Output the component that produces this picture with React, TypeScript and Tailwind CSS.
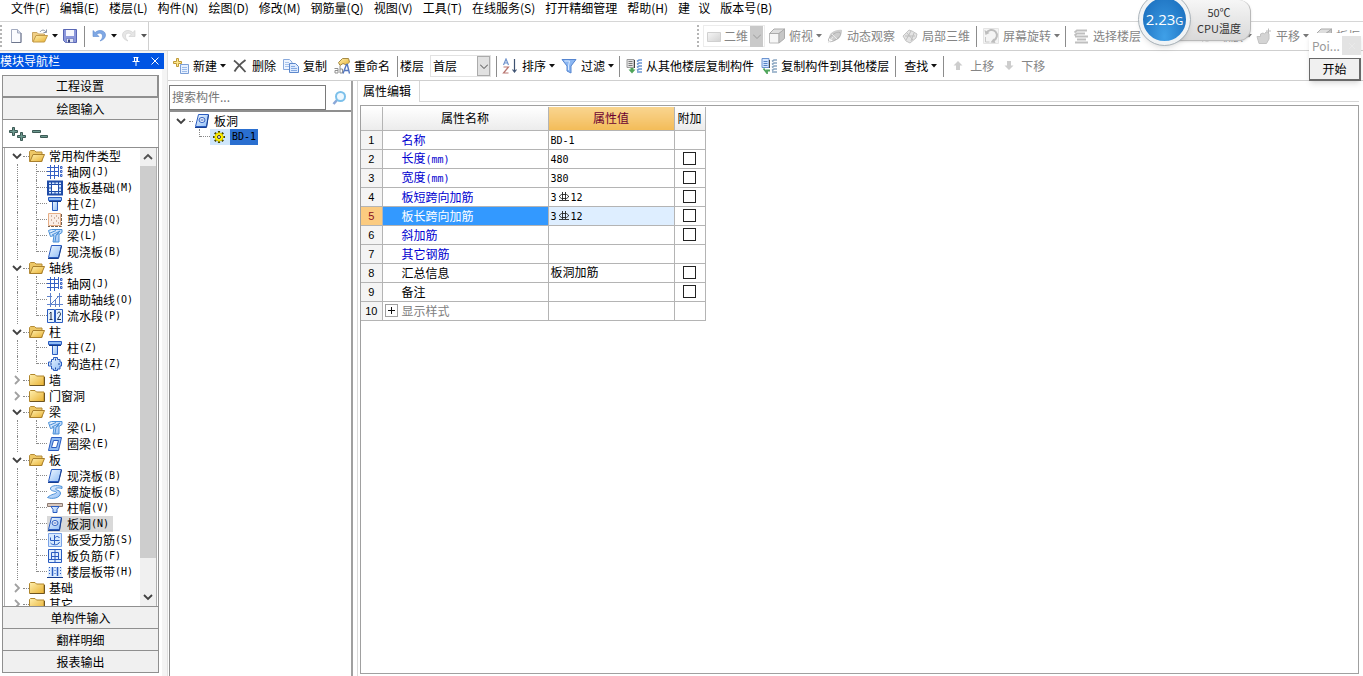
import React, { useState } from 'react';

type IconName =
  | 'newFile' | 'openFile' | 'save' | 'undo' | 'redo'
  | 'newItem' | 'cross' | 'copy' | 'rename' | 'sort' | 'filter' | 'copyFrom' | 'copyTo' | 'up' | 'down'
  | 'flat' | 'cube' | 'orbit' | 'part3d' | 'rotate' | 'floors' | 'zoom' | 'pan' | 'search'
  | 'folderOpen' | 'folder' | 'grid' | 'raft' | 'column' | 'wall' | 'beam' | 'slab' | 'auxAxis' | 'section'
  | 'tieColumn' | 'ringBeam' | 'spiral' | 'cap' | 'hole' | 'mainBar' | 'negBar' | 'strip' | 'gear';

const BLUE = '#2a5cc0';
const LIGHT = 'url(#steel)';

// shared gradients, referenced by id from the icons
const IconDefs = () => (
  <svg className="absolute w-0 h-0" aria-hidden="true">
    <defs>
      <linearGradient id="steel" x1="0" y1="0" x2="1" y2="1">
        <stop offset="0" stopColor="#f0f8ff" />
        <stop offset="1" stopColor="#8fbcf5" />
      </linearGradient>
      <linearGradient id="gold" x1="0" y1="0" x2="1" y2="1">
        <stop offset="0" stopColor="#fff0b0" />
        <stop offset="1" stopColor="#e8b030" />
      </linearGradient>
      <linearGradient id="ash" x1="0" y1="0" x2="1" y2="1">
        <stop offset="0" stopColor="#f6f6f6" />
        <stop offset="1" stopColor="#d2d2d2" />
      </linearGradient>
    </defs>
  </svg>
);

const shapes: Record<IconName, React.ReactNode> = {
  newFile: (
    <>
      <path d="M3.500 1.500h6l3.500 3.500v9.500H3.500z" fill="#fbfcff" stroke="#a3abc0" />
      <path d="M9.500 1.500V5H13" fill="#d5dbea" stroke="#a3abc0" />
      <path d="M13 5v9.500H3.500" fill="none" stroke="#6c758c" />
    </>
  ),
  openFile: (
    <>
      <path d="M.5 13.500V4.500h4.500L6.500 6h6v7.500z" fill="#f0cf86" stroke="#c9a562" />
      <path d="M1 14l3-6.500h11.500L12.500 14z" fill="url(#gold)" stroke="#c39a48" />
      <path d="M8 4c1.500-2.500 4.500-2.500 6 0M14.500 1.500v3h-3" fill="none" stroke="#8b95a5" />
    </>
  ),
  save: (
    <>
      <path d="M1.500 1.500h13v13h-11l-2-2z" fill="#8c98dc" stroke="#5866b4" />
      <path d="M4 2h8v6H4z" fill="#f6f7fd" />
      <path d="M4.500 10.500h7v4h-7z" fill="#e2e6f4" stroke="#5866b4" strokeWidth=".6" />
      <path d="M6 11.500h2v3H6z" fill="#38447f" />
    </>
  ),
  undo: (
    <path d="M2 2.500v6h6L5.800 6.300C8 4.300 11.500 5 11.500 8c0 2-1 3.500-2.500 5 3.500-1 5.500-3.300 5.500-6C14.500 2.500 8 .8 4.200 4.500z" fill="#7fa8e4" stroke="#5f8bd0" strokeWidth=".6" />
  ),
  redo: (
    <path d="M14 2.500v6H8l2.200-2.200C8 4.300 4.500 5 4.500 8c0 2 1 3.500 2.500 5C3.500 12 1.500 9.700 1.500 7 1.500 2.500 8 .8 11.800 4.500z" fill="#e6e6e6" stroke="#cccccc" strokeWidth=".6" />
  ),
  newItem: (
    <>
      <path d="M7.500 6.500h8v9h-8z" fill="#e8f1ff" stroke="#7c9fd6" />
      <path d="M9 9.500h5M9 11.500h5M9 13.500h5" stroke="#9bbbea" />
      <path d="M3.500 .5h2v3h3v2h-3v3h-2v-3h-3v-2h3z" fill="#ffe88c" stroke="#bf9a38" />
    </>
  ),
  cross: <path d="M2 2.500C6 5.500 10 10 13.500 14M13.500 2C9.500 5 5 9 2.500 13.500" stroke="#555" strokeWidth="1.800" />,
  copy: (
    <>
      <path d="M.5 1.500h6l2.500 2.500v7.500H.5z" fill="#eef5ff" stroke="#88a9dc" />
      <path d="M2 4.500h4M2 6.500h5M2 8.500h5" stroke="#a9c4ec" />
      <path d="M6.500 5.500h6l3 3v6h-9z" fill="#dceaff" stroke="#5d88cc" />
      <path d="M8 8.500h4M8 10.500h6M8 12.500h6" stroke="#85aae2" />
    </>
  ),
  rename: (
    <>
      <path d="M4.500 4.500l4-4h6L15.500 4l-3 3-3.500-1.500-3 2z" fill="url(#gold)" stroke="#a58a45" />
      <path d="M0.500 10.500h3.500v4.500H1v-2.500h3M6 8v7h2.500v-4H6" fill="none" stroke="#8f8f8f" />
      <path d="M9 15.500l3.500-9h.8l2.200 9M10.500 12.500h4.500" fill="none" stroke="#5577c0" strokeWidth="1.400" />
    </>
  ),
  sort: (
    <>
      <path d="M1.500 7l2.500-6 2.500 6M2.500 5h3" fill="none" stroke="#6f92cc" strokeWidth="1.200" />
      <path d="M1.500 9h5l-5 6h5" fill="none" stroke="#b97772" strokeWidth="1.200" />
      <path d="M12.500 1v12M10.500 11.500l2 2.500 2-2.500" fill="none" stroke="#3d5170" strokeWidth="1.200" />
    </>
  ),
  filter: (
    <>
      <path d="M1 1.500h14L10 8v7l-4-2V8z" fill="#8ab6f2" stroke="#5585d0" />
      <path d="M3.500 3h5L7.500 8v4" fill="none" stroke="#dcebff" />
    </>
  ),
  copyFrom: (
    <>
      <path d="M1 1.500h7v8H1z" fill="#e2e2e2" stroke="#9a9a9a" />
      <path d="M2.500 3.500h4M2.500 5.500h4M2.500 7.500h4" stroke="#777" />
      <path d="M8.500 2v8" stroke="#444" />
      <path d="M2.500 11.500h2V10h3v1.500h2l-3.500 4z" fill="#4fa55a" />
      <path d="M16 2h-3l-2 1.500M16 5h-3l-2 1.500M16 8h-3l-2 1.500M16 11h-3l-2 1.500M16 14h-5" fill="none" stroke="#6c96d2" strokeWidth="1.600" />
    </>
  ),
  copyTo: (
    <>
      <path d="M1 .5h7v9H1z" fill="#d5e6ff" stroke="#6c94d0" />
      <path d="M2.500 3.500h4M2.500 5.500h4M2.500 7.500h4" stroke="#5583c4" />
      <path d="M8.500 2v8" stroke="#444" />
      <path d="M2.500 10.500L6 15v-2.500h3" fill="none" stroke="#4fa55a" strokeWidth="1.800" />
      <path d="M16 2h-3l-2 1.500M16 5h-3l-2 1.500M16 8h-3l-2 1.500M16 11h-3l-2 1.500M16 14h-5" fill="none" stroke="#8aa6c2" strokeWidth="1.600" />
    </>
  ),
  up: <path d="M8 3l4.500 4.500H10V12H6V7.500H3.500z" fill="#cdcdcd" />,
  down: <path d="M8 12L3.500 7.500H6V3h4v4.500h2.500z" fill="#cdcdcd" />,
  flat: <path d="M1.500 4.500h13v9h-13z" fill="url(#ash)" stroke="#d0d0d0" />,
  cube: (
    <>
      <path d="M.5 5.500h9.500v9.500H.5z" fill="#f6f6f6" stroke="#bcbcbc" />
      <path d="M.5 5.500L5 1h10.500L10 5.500z" fill="#dedede" stroke="#ababab" />
      <path d="M10 5.500L15.500 1v9.500L10 15z" fill="#c6c6c6" stroke="#ababab" />
    </>
  ),
  orbit: (
    <>
      <path d="M2 10C2 5 8 1 15 2c0 6-3 10-9 11z" fill="#cdcdcd" />
      <ellipse cx="7.500" cy="9" rx="7" ry="3" transform="rotate(-35 7.500 9)" fill="none" stroke="#b2b2b2" />
      <path d="M1 15l5-6M5 6l5 5" stroke="#eaeaea" />
    </>
  ),
  part3d: (
    <>
      <path d="M1 8l6-6 3 1 5 3-1 4-6 5-4-2z" fill="#e4e4e4" stroke="#c4c4c4" />
      <path d="M5 5l6 7M9 3L4 12M12 5l-3 8M3 8h10" stroke="#bfbfbf" fill="none" />
    </>
  ),
  rotate: (
    <>
      <path d="M.5 .5h15v15H.5z" fill="#f4f4f4" stroke="#e4e4e4" />
      <path d="M3.500 5a5.500 5.500 0 1 1 7 7.500" fill="none" stroke="#bdbdbd" strokeWidth="2" />
      <path d="M1.500 2l1 5 4-2zM12.500 15l-5-.5 3-4z" fill="#bdbdbd" />
      <path d="M2.500 9v5h4" fill="none" stroke="#c8c8c8" />
    </>
  ),
  floors: (
    <path d="M4 2.500h10M4 5.500h8M2 8.500h13M4 11.500h9M2 14.500h13M4.500 2L1.500 4.500M4.500 5L1.500 7.500" stroke="#bfbfbf" strokeWidth="1.800" fill="none" />
  ),
  zoom: (
    <>
      <circle cx="8" cy="8" r="5" fill="#e4e4e4" stroke="#bdbdbd" />
      <path d="M3 13l3-3" stroke="#bdbdbd" strokeWidth="2" />
    </>
  ),
  pan: (
    <>
      <path d="M1 8.500h3.500V6L7 5l1.500 1L10 4h1.500l1.500 2v5l-2.500 4.500H3z" fill="#d4d4d4" stroke="#c2c2c2" />
      <path d="M12.500 .5v5M10 3h5" stroke="#bbb" />
    </>
  ),
  search: (
    <>
      <path d="M6.500 9.500L2.500 14" stroke="#8aa8d8" strokeWidth="2.600" />
      <circle cx="9.500" cy="6.500" r="4.500" fill="#eef8ff" stroke="#7cc0ea" strokeWidth="2" />
    </>
  ),
  folderOpen: (
    <>
      <path d="M.5 13.500v-10l1-1h4l1.500 1.500h6v9.500z" fill="#edc766" stroke="#b58c38" />
      <path d="M1 13.500L4 6.500h11.500L12.500 13.500z" fill="url(#gold)" stroke="#a87f2c" />
    </>
  ),
  folder: (
    <>
      <path d="M.5 13.500V3.500l1-1h4.500L7.500 4h7.500v9.500z" fill="url(#gold)" stroke="#b0862c" />
      <path d="M1 13.500h14.500V5" fill="none" stroke="#6e5420" />
    </>
  ),
  grid: (
    <>
      <path d="M3.500 1v14M7.500 1v14M11.500 1v12M0 3.500h12M0 7.500h12M0 11.500h12" stroke="#3560c4" fill="none" />
      <path d="M13.500 2.500h1.500v2h-1.500zM13.500 6.500h1.500v2h-1.500zM13.500 10.500h1.500v2h-1.500z" stroke="#3560c4" fill="#fff" />
    </>
  ),
  raft: (
    <>
      <path d="M1 1.500h14v13H1z" fill="#d4e8ff" stroke="#1f4ca8" strokeWidth="2" />
      <path d="M4.500 4.500h7v7h-7z" fill="#fff" stroke="#1f4ca8" />
      <path d="M4.500 2v2.500M8 2v2.500M11.500 2v2.500M4.500 11.500V14M8 11.500V14M11.500 11.500V14M2 4.500h2.500M2 8h2.500M2 11.500h2.500M11.500 4.500H14M11.500 8H14M11.500 11.500H14" stroke="#1f4ca8" />
    </>
  ),
  column: (
    <>
      <path d="M5.500 5h5v9.500h-5z" fill={LIGHT} stroke={BLUE} />
      <path d="M1.500 1.500h13v3h-13z" fill="#8fbcf5" stroke={BLUE} />
      <path d="M2 5.500h12" stroke="#123a86" />
    </>
  ),
  wall: (
    <>
      <path d="M1.500 1.500h12v12h-12z" fill="#fbeee6" stroke="#e6ae86" />
      <path d="M14.500 2v12.500H1" fill="none" stroke="#75604f" strokeDasharray="3 1" />
      <path d="M4 8h1M7 6h1M9 9h1M6 11h1M9 4h1M4 4h1M11 11h1M11 6h1" stroke="#a5765f" />
    </>
  ),
  beam: (
    <>
      <path d="M1.500 2.500l3-1h10.500v3l-3 2v7.500h-6l1-6.500-3.500 1z" fill={LIGHT} stroke="#4a90d8" />
      <path d="M2 5.500l7-3M5 7l8-4M8 14l1-7 4-4M9 7l3-1.500" stroke="#4a90d8" fill="none" />
    </>
  ),
  slab: (
    <>
      <path d="M4.500 1.500h10l-3 12h-10z" fill={LIGHT} stroke={BLUE} />
      <path d="M1 14.500h10.500l3-12.500" fill="none" stroke="#173f90" />
    </>
  ),
  auxAxis: (
    <path d="M3.500 1v14M12.500 1v14M0 4.500h5M0 12.500h16M10 4.500h5M4 12l9-9M8.500 7v8" stroke="#5f82cc" fill="none" />
  ),
  section: (
    <>
      <path d="M.5 1.500h7v13h-7zM8.500 1.500h7v13h-7z" fill="#e8f4ff" stroke={BLUE} />
      <path d="M2.500 5.500L4 4v7.500M2.500 11.500h3M10.500 5.500c.5-2 3-1.800 3 .3 0 1.700-2 3.200-3 5.700h3.500" fill="none" stroke="#1c2d4a" />
    </>
  ),
  tieColumn: (
    <>
      <path d="M4.500 3.500h2v-2h4v2h2.500v2.500h1.500v4H13v3h-2.500v1.500h-4V13h-2v-3h-3V6h3z" fill={LIGHT} stroke={BLUE} />
      <path d="M3 8h2M11 8h2M8.500 2.500v2M8.500 11.500v2" stroke="#1f4ca8" />
    </>
  ),
  ringBeam: (
    <>
      <path d="M4.500 1.500h10l-3 13h-10z" fill="#8fbcf5" stroke={BLUE} />
      <path d="M6.500 4.500h5l-2 7h-5z" fill="#fff" stroke={BLUE} />
    </>
  ),
  spiral: (
    <path d="M15 2.500C9 .5 3 2 3.500 5c.5 2.500 6 2 6 3.500S4 10 .5 13.500c5 2 13 .5 13-4.500 0-3-5-2.500-5-4 0-1 3-1.500 6.500-.5z" fill={LIGHT} stroke="#4a90d8" />
  ),
  cap: (
    <>
      <path d="M.5 3.500h15v3H.5z" fill="#d8c8be" stroke="#8d7b72" />
      <path d="M4 6.500h8l-2 3v3H6v-3z" fill={LIGHT} stroke={BLUE} />
    </>
  ),
  hole: (
    <>
      <path d="M4.500 1.500h10l-2 12h-11z" fill={LIGHT} stroke={BLUE} />
      <path d="M1 14.500h11.500l2-12.500" fill="none" stroke="#173f90" />
      <ellipse cx="8" cy="7" rx="3" ry="2.500" fill="#fff" stroke={BLUE} />
      <path d="M6.500 7h3" stroke={BLUE} />
    </>
  ),
  mainBar: (
    <>
      <path d="M1.500 1.500h13v13h-13z" fill="#d6e9ff" stroke="#7aa2e6" />
      <path d="M7.500 3v9M3.500 5.500v3h9M12.500 6c-2-3-5-1-5 1M3.500 11c2 2.500 8 2.500 9-1" stroke={BLUE} fill="none" />
    </>
  ),
  negBar: (
    <>
      <path d="M1.500 1.500h13v13h-13z" fill="#e0efff" stroke={BLUE} />
      <path d="M4.500 11V4.500h7V11M4.500 8.500h7M8 2v12M2 11.500h12" stroke={BLUE} fill="none" />
    </>
  ),
  strip: (
    <>
      <path d="M1 3h14v10H1z" fill="#dcecff" />
      <path d="M5.500 3v9M10.500 3v9" stroke={BLUE} strokeWidth="1.500" />
      <path d="M2.500 3v9M8 3v9M13.500 3v9" stroke={BLUE} strokeDasharray="1 2" />
      <path d="M0 13.500h16" stroke="#173f90" />
    </>
  ),
  gear: (
    <>
      <path d="M8 2v12M2 8h12M3.800 3.800l8.400 8.400M12.200 3.800l-8.400 8.400" stroke="#4b4b00" strokeWidth="2.200" />
      <circle cx="8" cy="8" r="4" fill="#fff200" stroke="#e0d000" />
      <path d="M8 3.500v9M3.500 8h9" stroke="#fff200" />
      <circle cx="8" cy="8" r="1.500" fill="#fff" stroke="#333" />
    </>
  ),
};

const Icon = ({ name, className = '' }: { name: IconName; className?: string }) => (
  <svg viewBox="0 0 16 16" className={`w-4 h-4 shrink-0 ${className}`} fill="none" aria-hidden="true">
    {shapes[name]}
  </svg>
);

const Caret = ({ color = '#111' }: { color?: string }) => (
  <svg viewBox="0 0 6 4" className="w-[6px] h-1 shrink-0" aria-hidden="true">
    <path d="M0 0h6L3 3.500z" fill={color} />
  </svg>
);

const Chevron = ({ open = true, dir }: { open?: boolean; dir?: 'up' }) => (
  <svg viewBox="0 0 12 12" className="w-3 h-3 shrink-0" fill="none" aria-hidden="true">
    {dir === 'up' ? (
      <path d="M2 8l4-4 4 4" stroke="#505050" strokeWidth="1.800" />
    ) : open ? (
      <path d="M2 4l4 4 4-4" stroke="#404040" strokeWidth="1.800" />
    ) : (
      <path d="M4 2l4 4-4 4" stroke="#a0a0a0" strokeWidth="1.800" />
    )}
  </svg>
);

const Mono = ({ children }: { children: React.ReactNode }) => (
  <span className="font-['DejaVu_Sans_Mono',monospace] text-[10px]">{children}</span>
);

interface ToolProps {
  icon?: IconName;
  label: string;
  caret?: boolean;
  disabled?: boolean;
  className?: string;
}

const Tool = ({ icon, label, caret, disabled, className = 'mr-[7px]' }: ToolProps) => (
  <button
    type="button"
    disabled={disabled}
    className={`flex items-center gap-[3px] whitespace-nowrap shrink-0 ${disabled ? 'text-[#858585]' : 'text-black'} ${className}`}
  >
    {icon && <Icon name={icon} className="mr-px" />}
    {label}
    {caret && <Caret color={disabled ? '#777' : '#111'} />}
  </button>
);

const Sep = ({ className = 'mr-[6px]' }: { className?: string }) => (
  <span className={`w-px h-[21px] bg-[#8c8c8c] shrink-0 ${className}`} />
);

const menus = [
  '文件(F)', '编辑(E)', '楼层(L)', '构件(N)', '绘图(D)', '修改(M)', '钢筋量(Q)', '视图(V)',
  '工具(T)', '在线服务(S)', '打开精细管理', '帮助(H)', '建\u00a0\u00a0\u00a0议', '版本号(B)',
];

interface Leaf {
  icon: IconName;
  name: string;
  hotkey: string;
}

interface Group {
  name: string;
  open: boolean;
  items: Leaf[];
}

const groups: Group[] = [
  {
    name: '常用构件类型',
    open: true,
    items: [
      { icon: 'grid', name: '轴网', hotkey: 'J' },
      { icon: 'raft', name: '筏板基础', hotkey: 'M' },
      { icon: 'column', name: '柱', hotkey: 'Z' },
      { icon: 'wall', name: '剪力墙', hotkey: 'Q' },
      { icon: 'beam', name: '梁', hotkey: 'L' },
      { icon: 'slab', name: '现浇板', hotkey: 'B' },
    ],
  },
  {
    name: '轴线',
    open: true,
    items: [
      { icon: 'grid', name: '轴网', hotkey: 'J' },
      { icon: 'auxAxis', name: '辅助轴线', hotkey: 'O' },
      { icon: 'section', name: '流水段', hotkey: 'P' },
    ],
  },
  {
    name: '柱',
    open: true,
    items: [
      { icon: 'column', name: '柱', hotkey: 'Z' },
      { icon: 'tieColumn', name: '构造柱', hotkey: 'Z' },
    ],
  },
  { name: '墙', open: false, items: [] },
  { name: '门窗洞', open: false, items: [] },
  {
    name: '梁',
    open: true,
    items: [
      { icon: 'beam', name: '梁', hotkey: 'L' },
      { icon: 'ringBeam', name: '圈梁', hotkey: 'E' },
    ],
  },
  {
    name: '板',
    open: true,
    items: [
      { icon: 'slab', name: '现浇板', hotkey: 'B' },
      { icon: 'spiral', name: '螺旋板', hotkey: 'B' },
      { icon: 'cap', name: '柱帽', hotkey: 'V' },
      { icon: 'hole', name: '板洞', hotkey: 'N' },
      { icon: 'mainBar', name: '板受力筋', hotkey: 'S' },
      { icon: 'negBar', name: '板负筋', hotkey: 'F' },
      { icon: 'strip', name: '楼层板带', hotkey: 'H' },
    ],
  },
  { name: '基础', open: false, items: [] },
  { name: '其它', open: false, items: [] },
];

// dotted connector in front of a child node
const Elbow = ({ last }: { last: boolean }) => (
  <span className="flex w-[11px] h-4 shrink-0">
    <span className={`border-l border-dotted border-[#8a8a8a] ${last ? 'h-2' : 'h-4'}`} />
    <span className="flex-1 h-2 border-b border-dotted border-[#8a8a8a]" />
  </span>
);

const ModuleTree = () => (
  <ul className="flex-1 min-w-0 overflow-hidden">
    {groups.map((group) => (
      <li key={group.name}>
        <div className="flex items-center h-4 pl-[6px]">
          <Chevron open={group.open} />
          <span className="w-[6px] border-t border-dotted border-[#8a8a8a]" />
          <Icon name={group.open ? 'folderOpen' : 'folder'} />
          <span className="ml-1 whitespace-nowrap">{group.name}</span>
        </div>
        <ul>
          {group.items.map((item, i) => (
            <li key={item.name} className="flex items-center h-4 pl-3">
              <span className="w-[19px] h-4 shrink-0 border-l border-dotted border-[#8a8a8a]" />
              <Elbow last={i === group.items.length - 1} />
              <span className={`flex items-center h-4 pr-1 whitespace-nowrap ${item.name === '板洞' ? 'bg-[#d9d9d9]' : ''}`}>
                <Icon name={item.icon} className="mr-1" />
                {item.name}
                <Mono>({item.hotkey})</Mono>
              </span>
            </li>
          ))}
        </ul>
      </li>
    ))}
  </ul>
);

const NavButton = ({ label }: { label: string }) => (
  <button type="button" className="h-[22px] shrink-0 bg-[#f0f0f0] border border-t-0 border-[#8f8f8f] text-center">
    {label}
  </button>
);

const Rebar = () => (
  <svg viewBox="0 0 12 12" className="inline-block w-3 h-3 mx-px align-[-2px]" fill="none" aria-label="HRB400" role="img">
    <path d="M3.500 3.500h5l2 1.500v1l-2 1.500h-5l-2-1.500V5zM4.500 1v8M7.500 1v8M1 9.500h10" stroke="#222" strokeWidth=".9" />
  </svg>
);

interface Prop {
  name: React.ReactNode;
  value?: React.ReactNode;
  check?: boolean;
  kind?: 'common' | 'group';
}

const props: Prop[] = [
  { name: '名称', value: <Mono>BD-1</Mono> },
  { name: <>长度<Mono>(mm)</Mono></>, value: <Mono>480</Mono>, check: true },
  { name: <>宽度<Mono>(mm)</Mono></>, value: <Mono>380</Mono>, check: true },
  { name: '板短跨向加筋', value: <Mono>3<Rebar />12</Mono>, check: true },
  { name: '板长跨向加筋', value: <Mono>3<Rebar />12</Mono>, check: true },
  { name: '斜加筋', check: true },
  { name: '其它钢筋' },
  { name: '汇总信息', value: '板洞加筋', check: true, kind: 'common' },
  { name: '备注', check: true, kind: 'common' },
  { name: '显示样式', kind: 'group' },
];

const PropertyTable = () => {
  const [selected, setSelected] = useState(4);

  return (
    <table className="table-fixed w-[344px] border-collapse text-left">
      <thead>
        <tr className="h-[23px] bg-linear-to-b from-white to-[#ececec]">
          <th className="w-[21px] border-r border-b border-[#b4b4b4]" />
          <th className="w-[166px] border-r border-b border-[#b4b4b4] font-normal text-center">属性名称</th>
          <th className="w-[126px] border-r border-b border-[#b4b4b4] font-normal text-center text-[#6b0030] bg-linear-to-b from-[#f9d58f] to-[#f3bc58]">
            属性值
          </th>
          <th className="w-[31px] border-r border-b border-[#b4b4b4] font-normal text-center whitespace-nowrap">附加</th>
        </tr>
      </thead>
      <tbody>
        {props.map((p, i) => {
          const active = i === selected;
          const color = active ? 'text-white' : p.kind === 'group' ? 'text-[#808080]' : p.kind === 'common' ? 'text-black' : 'text-[#0000d0]';
          return (
            <tr key={i} className="h-[19px]" onClick={() => setSelected(i)}>
              <td className={`border-r border-b border-[#b4b4b4] p-0 text-center text-[11px] font-['Liberation_Sans',sans-serif] ${active ? 'bg-[#fbcb80] text-[#8a1020]' : 'bg-[#f4f4f4]'}`}>
                {i + 1}
              </td>
              <td className={`border-r border-b border-[#b4b4b4] p-0 ${active ? 'bg-[#3399ff]' : ''}`}>
                <div className={`flex items-center h-[18px] ${color}`}>
                  <span className="w-[19px] flex pl-[2px]">
                    {p.kind === 'group' && (
                      <button type="button" aria-label="展开" className="w-[13px] h-[13px] border border-[#a0a0a0] bg-white flex items-center justify-center">
                        <svg viewBox="0 0 7 7" className="w-[7px] h-[7px]" aria-hidden="true">
                          <path d="M0 3.500h7M3.500 0v7" stroke="#111" />
                        </svg>
                      </button>
                    )}
                  </span>
                  <span>{p.name}</span>
                </div>
              </td>
              <td className={`border-r border-b border-[#b4b4b4] p-0 pl-[2px] ${active ? 'bg-[#deeeff]' : ''}`}>
                <div className="h-[18px] leading-4">{p.value}</div>
              </td>
              <td className="border-r border-b border-[#b4b4b4] p-0">
                {p.check && (
                  <input
                    type="checkbox"
                    aria-label={`附加 ${i + 1}`}
                    className="appearance-none block mx-auto w-[13px] h-[13px] border border-[#222] bg-white checked:bg-[#3399ff]"
                  />
                )}
              </td>
            </tr>
          );
        })}
      </tbody>
    </table>
  );
};

const StandardBar = () => (
  <div className="flex items-center h-[29px] shrink-0 overflow-hidden border-b border-[#cfcfcf]">
    <span className="h-[22px] border-l-2 border-dotted border-[#b5b5b5]" />
    <div className="flex items-center pl-[6px] shrink-0">
      <button type="button" aria-label="新建" className="mr-2"><Icon name="newFile" /></button>
      <button type="button" aria-label="打开" className="flex items-center gap-1 mr-1"><Icon name="openFile" /><Caret /></button>
      <button type="button" aria-label="保存" className="mr-[6px]"><Icon name="save" /></button>
      <Sep />
      <button type="button" aria-label="撤销" className="flex items-center gap-1 mr-1"><Icon name="undo" /><Caret /></button>
      <button type="button" aria-label="重做" className="flex items-center gap-1 mr-px"><Icon name="redo" /><Caret color="#555" /></button>
      <span className="w-px h-[28px] bg-[#d0d0d0]" />
    </div>
    <div className="flex items-center w-[666px] ml-auto shrink-0 overflow-hidden text-[#858585]">
      <span className="h-[22px] mr-[4px] border-l-2 border-dotted border-[#b5b5b5]" />
      <label className="flex items-center h-[22px] w-[62px] mr-[4px] pl-[2px] border border-[#ececec] shrink-0">
        <Icon name="flat" />
        <select aria-label="视图模式" className="appearance-none w-[28px] pl-[2px] outline-none shrink-0">
          <option>二维</option>
        </select>
        <span className="flex items-center justify-center w-[13px] h-[21px] bg-[#c9c9c9] shrink-0">
          <svg viewBox="0 0 8 5" className="w-2 h-[5px]" fill="none" aria-hidden="true">
            <path d="M0 .5l4 4 4-4" stroke="#9a9a9a" />
          </svg>
        </span>
      </label>
      <Tool icon="cube" label="俯视" caret disabled className="mr-[5px]" />
      <Tool icon="orbit" label="动态观察" disabled className="mr-[7px]" />
      <Tool icon="part3d" label="局部三维" disabled className="mr-[6px]" />
      <Sep />
      <Tool icon="rotate" label="屏幕旋转" caret disabled className="mr-[5px]" />
      <Sep className="mr-[7px]" />
      <Tool icon="floors" label="选择楼层" disabled className="mr-[58px]" />
      <Tool icon="zoom" label="缩放" caret disabled className="mr-1" />
      <Tool icon="pan" label="平移" caret disabled />
      <Tool icon="cube" label="板框" disabled />
    </div>
  </div>
);

const ComponentBar = () => (
  <div className="flex items-center h-[29px] shrink-0 overflow-hidden pl-[5px] border-b border-[#cfcfcf]">
    <Tool icon="newItem" label="新建" caret className="mr-[6px]" />
    <Tool icon="cross" label="删除" />
    <Tool icon="copy" label="复制" />
    <Tool icon="rename" label="重命名" />
    <Sep className="mr-[2px]" />
    <label htmlFor="floor" className="mr-[6px] shrink-0">楼层</label>
    <div className="flex items-center w-[61px] h-[22px] mr-[5px] border border-[#e2e2e2] shrink-0">
      <select id="floor" className="appearance-none flex-1 min-w-0 pl-[2px] outline-none">
        <option>首层</option>
      </select>
      <span className="flex items-center justify-center w-[13px] h-[20px] bg-[#e1e1e1] border border-[#ababab] shrink-0">
        <svg viewBox="0 0 8 5" className="w-2 h-[5px]" fill="none" aria-hidden="true">
          <path d="M0 .5l4 4 4-4" stroke="#444" />
        </svg>
      </span>
    </div>
    <Sep className="mr-[5px]" />
    <Tool icon="sort" label="排序" caret className="mr-[6px]" />
    <Tool icon="filter" label="过滤" caret className="mr-[5px]" />
    <Sep />
    <Tool icon="copyFrom" label="从其他楼层复制构件" />
    <Tool icon="copyTo" label="复制构件到其他楼层" className="mr-[6px]" />
    <Sep className="mr-2" />
    <Tool label="查找" caret className="mr-[6px]" />
    <Sep />
    <Tool icon="up" label="上移" disabled />
    <Tool icon="down" label="下移" disabled />
  </div>
);

const ModulePanel = () => (
  <aside className="flex flex-col w-[167px] shrink-0 pt-[2px] bg-[#f4f4f4]">
    <div className="flex items-center h-[16px] w-[164px] pr-1 bg-[#0054e3] text-white">
      <span className="flex-1 whitespace-nowrap">模块导航栏</span>
      <button type="button" aria-label="固定" className="mr-[9px]">
        <svg viewBox="0 0 10 10" className="w-[10px] h-[10px]" fill="none" aria-hidden="true">
          <path d="M2.500 1.500h5M3.500 1.500v4M6.500 1.500v4M5.800 1.500v4M1.500 5.500h7M5 6v4" stroke="#fff" />
        </svg>
      </button>
      <button type="button" aria-label="关闭">
        <svg viewBox="0 0 10 10" className="w-[10px] h-[10px]" fill="none" aria-hidden="true">
          <path d="M1.500 1.500l7 7M8.500 1.500l-7 7" stroke="#fff" />
        </svg>
      </button>
    </div>
    <div className="flex flex-col flex-1 min-h-0 w-[162px] pt-[6px] pl-[2px] pr-[3px] pb-[3px] bg-white">
      <button type="button" className="h-[23px] shrink-0 bg-[#f0f0f0] border border-r-2 border-b-2 border-[#8f8f8f]">工程设置</button>
      <NavButton label="绘图输入" />
      <div className="flex items-center gap-[6px] h-[27px] shrink-0 pl-[6px] border-x border-[#a0a0a0]">
        <button type="button" aria-label="全部展开">
          <svg viewBox="0 0 17 16" className="w-[17px] h-4" aria-hidden="true">
            <path d="M3.500 1.500h2v3h3v2h-3v3h-2v-3h-3v-2h3zM11.500 6.500h2v3h3v2h-3v3h-2v-3h-3v-2h3z" fill="#6c9a90" stroke="#3d5a55" />
          </svg>
        </button>
        <button type="button" aria-label="全部折叠">
          <svg viewBox="0 0 17 16" className="w-[17px] h-4" aria-hidden="true">
            <path d="M.5 4.500h8v2h-8zM8.500 9.500h7v2h-7z" fill="#6c9a90" stroke="#3d5a55" />
          </svg>
        </button>
      </div>
      <div className="flex flex-1 min-h-0 px-px border border-[#8f8f8f]">
        <div className="flex flex-1 min-w-0 border-x border-[#b0b0b0]">
          <ModuleTree />
          <div className="flex flex-col w-4 shrink-0 bg-[#f0f0f0]">
            <span className="flex items-center justify-center h-[18px]"><Chevron dir="up" /></span>
            <span className="h-[392px] bg-[#cdcdcd]" />
            <span className="flex-1" />
            <span className="flex items-center justify-center h-[18px]"><Chevron /></span>
          </div>
        </div>
      </div>
      <NavButton label="单构件输入" />
      <NavButton label="翻样明细" />
      <NavButton label="报表输出" />
    </div>
  </aside>
);

const ComponentList = () => (
  <section className="flex flex-col w-[185px] shrink-0 pt-1 pl-px border-r-2 border-[#a0a0a0]">
    <div className="flex items-center h-[25px] shrink-0">
      <input
        type="text"
        aria-label="搜索构件"
        placeholder="搜索构件..."
        className="flex-1 min-w-0 h-[25px] px-[2px] pb-[3px] border border-[#7a7a7a] outline-none placeholder:text-[#767676]"
      />
      <button type="button" aria-label="搜索" className="flex items-center justify-center w-[25px] h-[25px]">
        <Icon name="search" />
      </button>
    </div>
    <div className="flex-1 pt-px pl-[4px] border-t-2 border-l border-[#8f8f8f]">
      <div className="flex items-center h-4">
        <span className="flex pl-px"><Chevron /></span>
        <span className="w-1 ml-[2px] mr-px border-t border-dotted border-[#8a8a8a]" />
        <Icon name="hole" />
        <span className="ml-1">板洞</span>
      </div>
      <div className="flex items-center h-4 pl-[25px]">
        <Elbow last />
        <span className="flex items-center h-4 pl-px pr-[3px] bg-[#cfe6fb]"><Icon name="gear" /></span>
        <span className="flex items-center h-4 px-[2px] bg-[#2a6fd0] text-black"><Mono>BD-1</Mono></span>
      </div>
    </div>
  </section>
);

const CpuWidget = () => (
  <div className="absolute top-0 right-[112px] flex w-[112px] h-[45px]">
    <div className="flex-1 h-[41px] ml-[26px] pl-[27px] pt-1 rounded-r-xl bg-linear-to-b from-[#f6f6f6] to-[#d9d9d9] border-r border-b border-[#b9b9b9] shadow text-[11px] leading-4 text-[#333] text-center pr-1 whitespace-nowrap">
      <div>50℃</div>
      <div>CPU温度</div>
    </div>
    <div className="absolute left-0 bottom-0 w-[51px] h-[51px] rounded-full border-4 border-[#f0f3f5] outline-1 outline-[#a9b3ba] bg-radial-[at_50%_90%] from-[#3fa0e8] to-[#1668b8] flex items-center justify-center text-white shadow-md whitespace-nowrap">
      <span className="font-['Open_Sans',sans-serif] text-[15px]">2.23<span className="text-[11px]">G</span></span>
    </div>
  </div>
);

const PointerWindow = () => (
  <div className="absolute top-[33px] right-[2px] flex flex-col w-[52px] bg-white shadow-md">
    <div className="flex items-center justify-between h-[25px] pl-[3px] text-[#9a9a9a]">
      <span className="text-[12px]">Poi...</span>
      <button type="button" aria-label="关闭" className="flex items-center justify-center w-[19px] h-[19px] bg-[#e3e3e3]">
        <svg viewBox="0 0 8 8" className="w-2 h-2" aria-hidden="true">
          <path d="M1 1l6 6M7 1L1 7" stroke="#e9e9e9" />
        </svg>
      </button>
    </div>
    <button type="button" className="h-[23px] bg-[#f0f0f0] border border-r-2 border-b-2 border-[#696969]">开始</button>
  </div>
);

export default function App() {
  return (
    <div className="relative flex flex-col h-screen overflow-hidden bg-white font-['Noto_Sans_CJK_SC',sans-serif] text-[12px] leading-4 text-black">
      <IconDefs />
      <nav className="flex items-start gap-[10px] h-[22px] shrink-0 pl-[11px] border-b border-[#d6d6d6] whitespace-nowrap">
        {menus.map((m) => (
          <button key={m} type="button">{m}</button>
        ))}
      </nav>
      <StandardBar />
      <div className="flex flex-1 min-h-0">
        <ModulePanel />
        <div className="flex flex-col flex-1 min-w-0 pt-px border-l border-[#e0e0e0]">
          <ComponentBar />
          <div className="flex flex-1 min-h-0">
            <ComponentList />
            <main className="flex flex-col flex-1 min-w-0 ml-1 pb-[2px] pr-1 border-l border-[#dadada]">
              <div className="flex h-[21px] shrink-0">
                <button type="button" className="w-[61px] h-[21px] pl-[5px] pb-[2px] text-left whitespace-nowrap">属性编辑</button>
                <span className="flex-1 border-l border-b border-[#d6d6d6]" />
              </div>
              <div className="flex-1 mt-[3px] ml-[2px] pt-px border border-[#a0a0a0]">
                <PropertyTable />
              </div>
            </main>
          </div>
        </div>
      </div>
      <CpuWidget />
      <PointerWindow />
    </div>
  );
}
